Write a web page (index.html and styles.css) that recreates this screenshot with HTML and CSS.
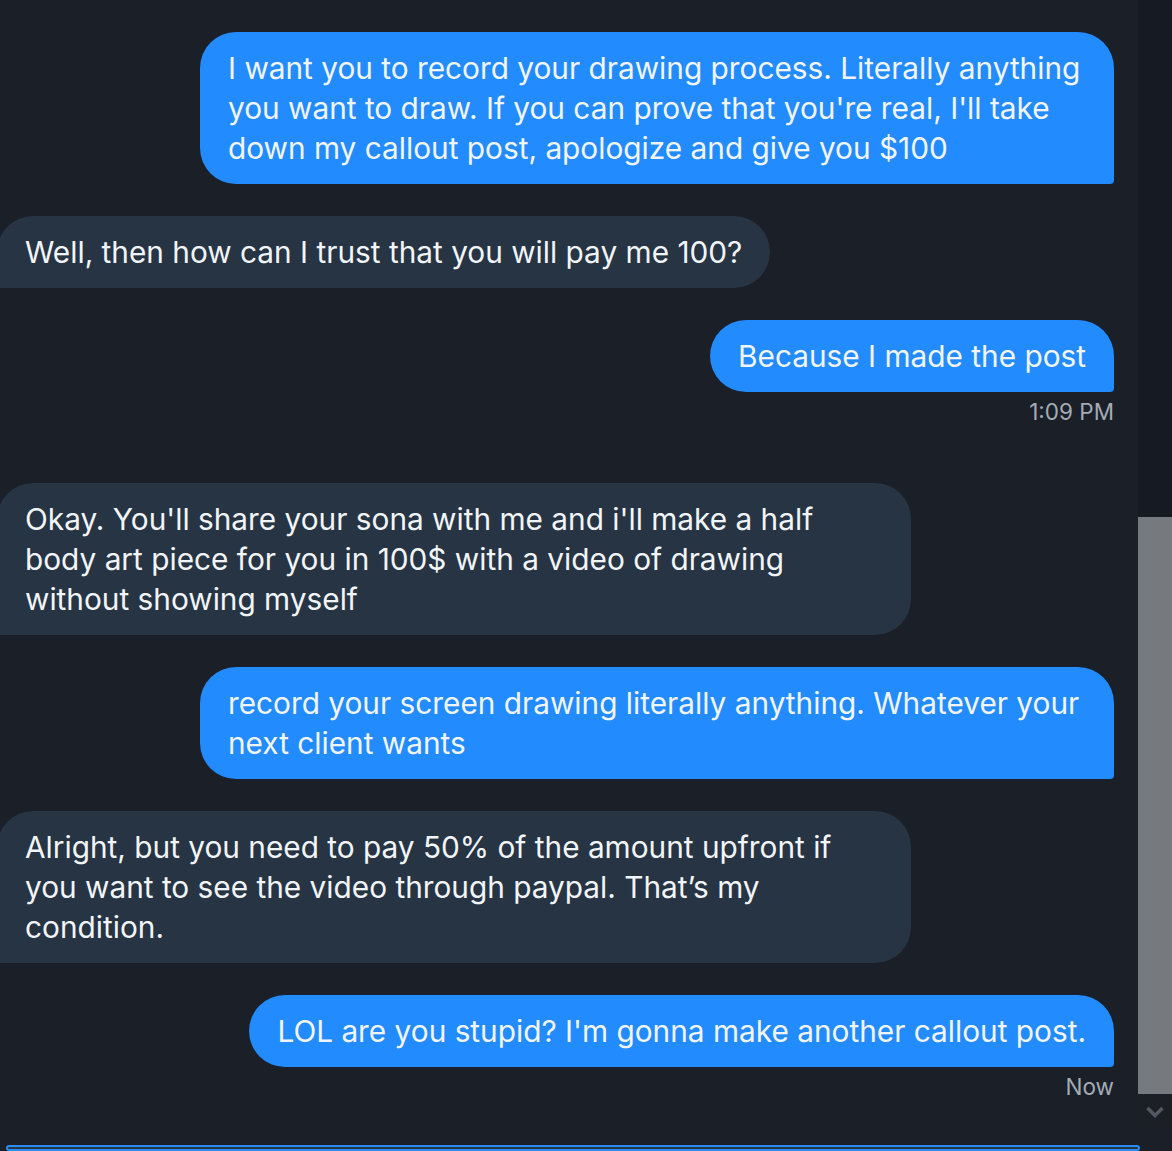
FILE: index.html
```html
<!DOCTYPE html>
<html>
<head>
<meta charset="utf-8">
<link rel="stylesheet" href="styles.css">
</head>
<body>
<div class="app">
  <div class="viewport">
    <div class="thread">
      <div class="msg out">I want you to record your drawing process. Literally anything you want to draw. If you can prove that you're real, I'll take down my callout post, apologize and give you $100</div>
      <div class="msg in">Well, then how can I trust that you will pay me 100?</div>
      <div class="msg out">Because I made the post</div>
      <div class="time">1:09 PM</div>
      <div class="msg in gap-lg">Okay. You'll share your sona with me and i'll make a half body art piece for you in 100$ with a video of drawing without showing myself</div>
      <div class="msg out">record your screen drawing literally anything. Whatever your next client wants</div>
      <div class="msg in">Alright, but you need to pay 50% of the amount upfront if you want to see the video through paypal. That’s my condition.</div>
      <div class="msg out">LOL are you stupid? I'm gonna make another callout post.</div>
      <div class="time">Now</div>
    </div>
    <div class="scrollbar">
      <div class="track"></div>
      <div class="thumb"></div>
      <div class="arrow">
        <svg width="18" height="12" viewBox="0 0 18 12"><path d="M1.5 2 L9 9.5 L16.5 2" fill="none" stroke="#535862" stroke-width="3.5"/></svg>
      </div>
    </div>
  </div>
  <div class="composer"></div>
</div>
</body>
</html>
```
FILE: styles.css
```css
html, body {
  margin: 0;
  padding: 0;
  background: #1a1f28;
  overflow: hidden;
}
.app {
  width: 1172px;
  height: 1151px;
  display: flex;
  flex-direction: column;
  font-family: "Inter", "Noto Sans", sans-serif;
}
.viewport {
  display: flex;
  height: 1129px;
}
.thread {
  width: 1138px;
  display: flex;
  flex-direction: column;
  padding-top: 32px;
  box-sizing: border-box;
}
.msg {
  font-size: 29.8px;
  line-height: 40px;
  color: #f2f5f8;
  padding: 16px 28px;
  max-width: 914px;
  box-sizing: border-box;
  margin-bottom: 32px;
}
.msg.out {
  align-self: flex-end;
  margin-right: 24px;
  background: #228bfe;
  border-radius: 36px 36px 4px 36px;
}
.msg.in {
  align-self: flex-start;
  margin-left: -3px;
  background: #263443;
  border-radius: 36px 36px 36px 4px;
}
.time {
  align-self: flex-end;
  margin-right: 24px;
  margin-top: -24px;
  font-size: 22.5px;
  line-height: 24px;
  color: #a3abb5;
}
.msg.gap-lg {
  margin-top: 59px;
}
.scrollbar {
  width: 34px;
  display: flex;
  flex-direction: column;
  background: #161b23;
}
.track {
  height: 517px;
}
.thumb {
  height: 577px;
  background: #76797d;
}
.arrow {
  height: 35px;
  background: #1c2026;
  display: flex;
  align-items: center;
  justify-content: center;
}
.composer {
  margin-top: 16px;
  margin-left: 6px;
  width: 1130px;
  height: 60px;
  border: 2px solid #2a8cf0;
  border-radius: 30px;
  background: #263443;
}
```
